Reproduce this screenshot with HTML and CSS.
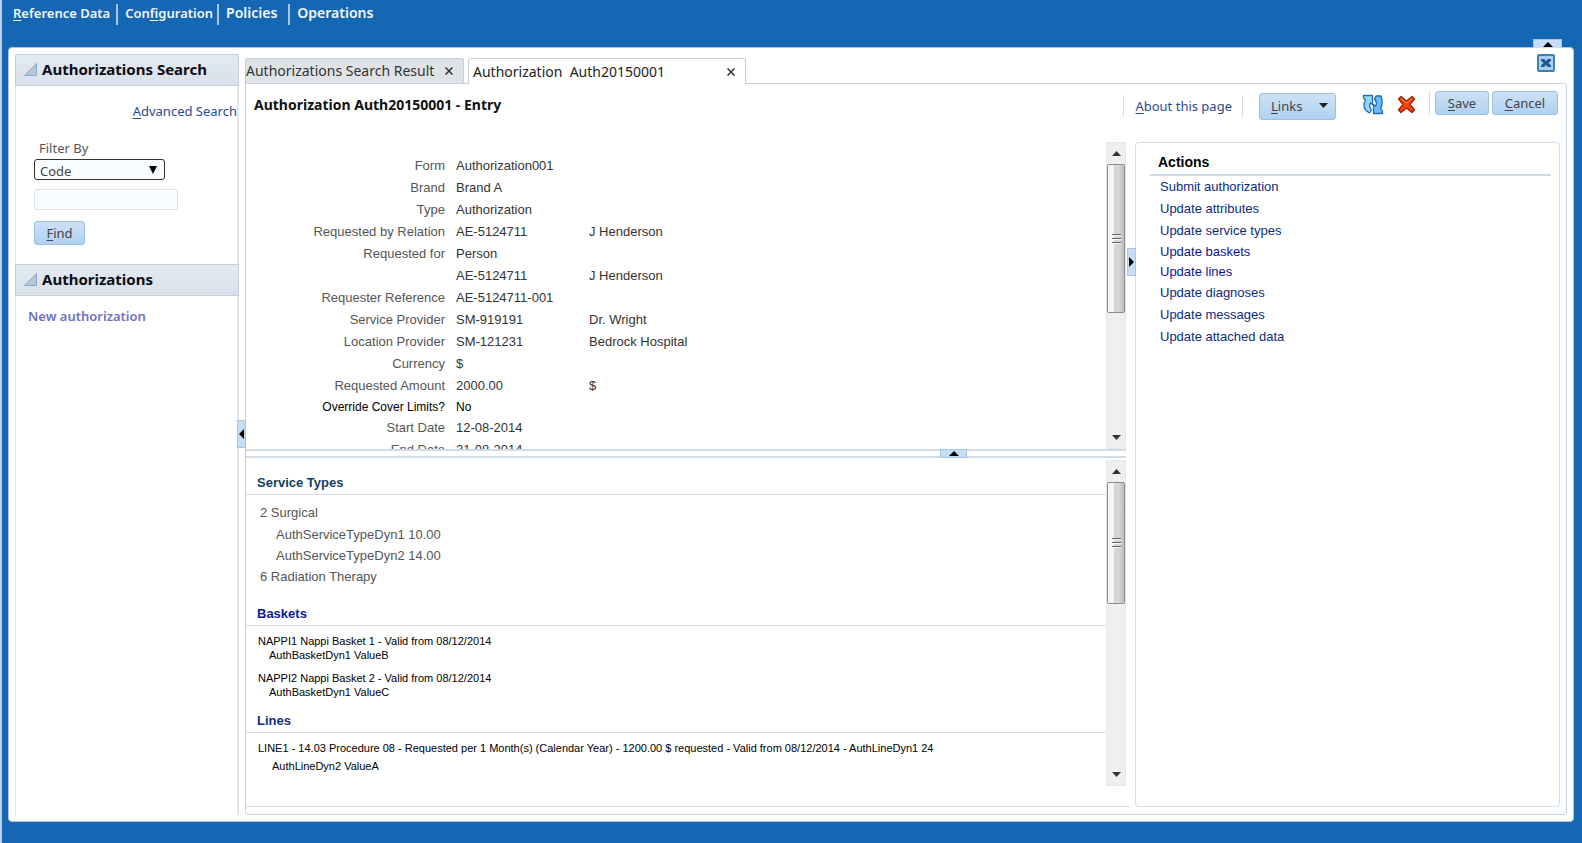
FILE: index.html
```html
<!DOCTYPE html>
<html lang="en">
<head>
<meta charset="utf-8">
<title>Authorization Auth20150001</title>
<link rel="stylesheet" href="styles.css">
</head>
<body>
<nav class="menu">
  <a href="#"><u>R</u>eference Data</a>
  <a class="snug" href="#">Con<u>f</u>iguration</a>
  <a class="large" href="#">Policies</a>
  <a class="large" href="#">Operations</a>
</nav>
<div class="shell">
  <button class="grip grip-top" aria-label="Collapse header"><svg width="10" height="5" viewBox="0 0 10 5"><path d="M0 5 5 0l5 5z"/></svg></button>
  <aside class="sidebar">
    <h2 class="side-head"><svg width="13" height="13" viewBox="0 0 13 13"><path d="M12.500.5v12H.5z" fill="#b4c9d8" stroke="#86aac8"/></svg>Authorizations Search</h2>
    <form class="search">
      <a class="advanced" href="#"><u>A</u>dvanced Search</a>
      <label for="filter">Filter By</label>
      <div class="select-wrap">
        <select id="filter"><option>Code</option></select>
        <svg width="8" height="8" viewBox="0 0 8 8"><path d="M0 0h8L4 8z"/></svg>
      </div>
      <input class="query" type="text" aria-label="Filter value">
      <button class="btn find" type="button"><u>F</u>ind</button>
    </form>
    <h2 class="side-head"><svg width="13" height="13" viewBox="0 0 13 13"><path d="M12.500.5v12H.5z" fill="#b4c9d8" stroke="#86aac8"/></svg>Authorizations</h2>
    <a class="new-auth" href="#">New authorization</a>
  </aside>
  <button class="grip grip-left" aria-label="Collapse sidebar"><svg width="5" height="10" viewBox="0 0 5 10"><path d="M5 0 0 5l5 5z"/></svg></button>
  <main class="main">
    <div class="tabs">
      <div class="tab"><span>Authorizations Search Result</span><button aria-label="Close tab"><svg width="8" height="8" viewBox="0 0 8 8"><path d="M.5.5l7 7M7.500.5l-7 7" stroke="#333" stroke-width="1.500"/></svg></button></div>
      <div class="tab active"><span>Authorization&nbsp; Auth20150001</span><button aria-label="Close tab"><svg width="8" height="8" viewBox="0 0 8 8"><path d="M.5.5l7 7M7.500.5l-7 7" stroke="#333" stroke-width="1.500"/></svg></button></div>
      <button class="close-all" aria-label="Close"><svg width="12" height="10" viewBox="0 0 12 10"><path d="M1 1h3l2 2 2-2h3v1.500L8.500 5 11 7.500V9H8L6 7 4 9H1V7.500L3.500 5 1 2.500z" fill="#1d5792"/></svg></button>
    </div>
    <div class="page">
      <header class="toolbar">
        <h1>Authorization Auth20150001 - Entry</h1>
        <div class="about"><a href="#"><u>A</u>bout this page</a></div>
        <button class="btn links"><span><u>L</u>inks</span><svg width="9" height="5" viewBox="0 0 9 5"><path d="M0 0h9L4.500 5z" fill="#222"/></svg></button>
        <button class="icon refresh" aria-label="Refresh"><svg width="22" height="21" viewBox="0 0 22 21"><path d="M1.500 1.500h9v9L8.500 9C7 11 7.500 13.500 9.500 16l-2 3C2 16.500.5 11 3.500 6l-2-2z" fill="#9ad4fa" stroke="#1b6cc0" stroke-width="1.300" stroke-linejoin="round"/><path d="M20.500 19.500h-9v-9l2 1.500c1.500-2 1-4.500-1-7l1.500-3h5c1.500 4 1.500 9-.5 13l2 2z" fill="#6bbcf7" stroke="#1b6cc0" stroke-width="1.300" stroke-linejoin="round"/></svg></button>
        <button class="icon" aria-label="Delete"><svg width="19" height="19" viewBox="0 0 19 19"><path d="M4 1.500 9.500 6 15 1.500 17.500 4 13 9.500l4.500 5.500-2.500 2.500-5.500-4.500L4 17.500 1.500 15 6 9.500 1.500 4z" fill="#f4430c" stroke="#9d2408" stroke-width="1.300" stroke-linejoin="round"/><path d="M4 3.500l5.500 4.500L15 3.500" fill="none" stroke="#ff8a50"/></svg></button>
        <div class="save-group">
          <button class="btn"><u>S</u>ave</button>
          <button class="btn"><u>C</u>ancel</button>
        </div>
      </header>
      <div class="split">
        <div class="left">
          <section class="pane upper">
            <dl class="fields">
              <dt>Form</dt><dd>Authorization001</dd><dd></dd>
              <dt>Brand</dt><dd>Brand A</dd><dd></dd>
              <dt>Type</dt><dd>Authorization</dd><dd></dd>
              <dt>Requested by Relation</dt><dd>AE-5124711</dd><dd>J Henderson</dd>
              <dt>Requested for</dt><dd>Person</dd><dd></dd>
              <dt></dt><dd>AE-5124711</dd><dd>J Henderson</dd>
              <dt>Requester Reference</dt><dd>AE-5124711-001</dd><dd></dd>
              <dt>Service Provider</dt><dd>SM-919191</dd><dd>Dr. Wright</dd>
              <dt>Location Provider</dt><dd>SM-121231</dd><dd>Bedrock Hospital</dd>
              <dt>Currency</dt><dd>$</dd><dd></dd>
              <dt>Requested Amount</dt><dd>2000.00</dd><dd>$</dd>
              <dt class="strong">Override Cover Limits?</dt><dd class="strong">No</dd><dd class="strong"></dd>
              <dt>Start Date</dt><dd>12-08-2014</dd><dd></dd>
              <dt>End Date</dt><dd>31-08-2014</dd><dd></dd>
            </dl>
            <div class="bar">
              <svg width="9" height="5" viewBox="0 0 9 5"><path d="M0 5 4.500 0 9 5z"/></svg>
              <div class="thumb thumb-form"><i></i><i></i><i></i></div>
              <svg class="down" width="9" height="5" viewBox="0 0 9 5"><path d="M0 0h9L4.500 5z"/></svg>
            </div>
          </section>
          <div class="splitter"><button class="grip" aria-label="Collapse details"><svg width="10" height="5" viewBox="0 0 10 5"><path d="M0 5 5 0l5 5z"/></svg></button></div>
          <section class="pane lower">
            <div class="details">
              <h3 class="teal">Service Types</h3>
              <ul class="types">
                <li>2 Surgical<ul><li>AuthServiceTypeDyn1 10.00</li><li>AuthServiceTypeDyn2 14.00</li></ul></li>
                <li>6 Radiation Therapy</li>
              </ul>
              <h3>Baskets</h3>
              <ul class="small">
                <li>NAPPI1 Nappi Basket 1 - Valid from 08/12/2014<p>AuthBasketDyn1 ValueB</p></li>
                <li>NAPPI2 Nappi Basket 2 - Valid from 08/12/2014<p>AuthBasketDyn1 ValueC</p></li>
              </ul>
              <h3 class="navy">Lines</h3>
              <ul class="small line-list">
                <li>LINE1 - 14.03 Procedure 08 - Requested per 1 Month(s) (Calendar Year) - 1200.00 $ requested - Valid from 08/12/2014 - AuthLineDyn1 24<p>AuthLineDyn2 ValueA</p></li>
              </ul>
            </div>
            <div class="bar">
              <svg width="9" height="5" viewBox="0 0 9 5"><path d="M0 5 4.500 0 9 5z"/></svg>
              <div class="thumb thumb-details"><i></i><i></i><i></i></div>
              <svg class="down" width="9" height="5" viewBox="0 0 9 5"><path d="M0 0h9L4.500 5z"/></svg>
            </div>
          </section>
        </div>
        <section class="actions">
          <button class="grip grip-right" aria-label="Collapse actions"><svg width="5" height="10" viewBox="0 0 5 10"><path d="M0 0l5 5-5 5z"/></svg></button>
          <h2>Actions</h2>
          <ul>
            <li><a href="#">Submit authorization</a></li>
            <li><a href="#">Update attributes</a></li>
            <li><a href="#">Update service types</a></li>
            <li class="tight"><a href="#">Update baskets</a></li>
            <li class="tight"><a href="#">Update lines</a></li>
            <li><a href="#">Update diagnoses</a></li>
            <li><a href="#">Update messages</a></li>
            <li><a href="#">Update attached data</a></li>
          </ul>
        </section>
      </div>
    </div>
  </main>
</div>
</body>
</html>
```
FILE: styles.css
```css
* { box-sizing: border-box; }
body {
  margin: 0;
  height: 100vh;
  display: flex;
  flex-direction: column;
  background: #1566b3;
  border-left: 2px solid #b9cfe3;
  font: 13px/22px "Liberation Sans", Arial, sans-serif;
  color: #333;
}
h1, h2, h3, ul, dl, dd, p { margin: 0; padding: 0; }
ul { list-style: none; }
a { text-decoration: none; }
u { text-underline-offset: 2px; }
button, select, input { font: inherit; padding: 0; }
svg { display: block; }

.menu, .sidebar, .tabs, .toolbar { font-family: "Noto Sans", sans-serif; }

.menu { display: flex; padding: 4px 0 0 3px; height: 47px; }
.menu a {
  height: 21px;
  line-height: 18px;
  padding: 0 6px 0 8px;
  color: #f0f6fc;
  font-size: 13px;
  font-weight: 600;
}
.menu a + a { border-left: 2px solid #a9c8e6; }
.menu a.snug { padding: 0 4px 0 7px; }
.menu a.large { font-size: 14px; padding: 0 11px 0 7px; }

.shell {
  position: relative;
  flex: 1;
  min-height: 0;
  display: flex;
  gap: 6px;
  margin: 0 8px 21px 6px;
  padding: 6px;
  background: #fff;
  border: 1px solid #a9c6e2;
  border-radius: 4px;
}

.grip {
  display: flex;
  align-items: center;
  justify-content: center;
  background: #c6def5;
  border: 1px solid #a3c6e6;
}
.grip-top { position: absolute; right: 11px; top: -9px; width: 29px; height: 9px; border-bottom: 0; }
.grip-left { position: absolute; left: 228px; top: 372px; width: 9px; height: 28px; }
.grip-right { position: absolute; left: -9px; top: 105px; width: 9px; height: 28px; }

.sidebar {
  width: 224px;
  border: solid #e0e6ec;
  border-width: 0 2px;
  border-left-width: 1px;
}
.side-head {
  display: flex;
  align-items: center;
  gap: 5px;
  height: 32px;
  margin: 0 -2px 0 -1px;
  padding: 0 0 2px 8px;
  border: 1px solid #c2cfdc;
  background: linear-gradient(#e4eaf1, #d8e0e9);
  font-size: 15px;
  color: #0c0c14;
}
.side-head:first-child { border-radius: 3px 3px 0 0; }
.search { display: flex; flex-direction: column; align-items: flex-start; padding: 14px 0 19px 18px; }
.advanced { align-self: flex-end; line-height: 22px; color: #2b4a90; }
.search label { margin: 17px 0 0 5px; line-height: 18px; color: #555; padding-bottom: 2px; }
.select-wrap { display: grid; align-items: center; justify-items: end; }
.select-wrap > * { grid-area: 1 / 1; }
.select-wrap svg { margin-right: 8px; pointer-events: none; }
.select-wrap select {
  appearance: none;
  width: 131px;
  height: 21px;
  padding: 0 0 2px 5px;
  border: 1px solid #333;
  border-radius: 3px;
  background: #f9fdff;
  color: #444;
}
.query { width: 144px; height: 21px; margin-top: 9px; border: 1px solid #d9e2ea; border-radius: 3px; background: #f9fdff; }
.btn {
  height: 24px;
  padding-bottom: 2px;
  border: 1px solid #9cc0e0;
  border-radius: 3px;
  background: linear-gradient(#cde1f5, #afd1f1);
  color: #444;
}
.find { width: 51px; margin-top: 11px; }
.new-auth { display: block; padding: 9px 0 0 12px; color: #7070c4; font-weight: 600; }

.main { flex: 1; min-width: 0; display: flex; flex-direction: column; padding-top: 4px; }
.tabs { display: flex; height: 25px; gap: 4px; position: relative; z-index: 1; font-size: 14px; }
.tab {
  display: flex;
  align-items: center;
  justify-content: space-between;
  width: 219px;
  height: 25px;
  border: 1px solid #c2d0de;
  border-bottom: 0;
  border-radius: 3px 3px 0 0;
  background: #dfe3e8;
  color: #333;
  white-space: nowrap;
}
.tab button { border: 0; background: none; margin-right: 10px; }
.tab.active { width: 278px; height: 26px; padding-left: 4px; background: #fff; color: #222; }
.close-all {
  display: grid;
  place-items: center;
  width: 18px;
  height: 18px;
  margin: -4px 12px 0 auto;
  border: 2px solid #3f7fb8;
  border-radius: 2px;
  background: #a9cdea;
}
.page { flex: 1; min-height: 0; display: flex; flex-direction: column; border: 1px solid #c6d3e0; border-radius: 0 3px 3px 3px; }

.toolbar { display: flex; align-items: flex-start; height: 58px; padding: 7px 8px 0 8px; }
.toolbar h1 { flex: 1; font-size: 14px; line-height: 28px; color: #111; }
.about { height: 22px; margin: 4px 16px 0 0; padding: 0 10px 0 11px; border: solid #d3dee8; border-width: 0 1px; }
.about a { color: #2b4a90; line-height: 22px; }
.links { display: flex; align-items: center; justify-content: space-between; width: 77px; height: 27px; margin: 2px 26px 0 0; padding: 0 7px 2px 11px; }
.icon { border: 0; background: none; margin: 4px 13px 0 0; }
.refresh { margin-top: 3px; }
.save-group { display: flex; gap: 3px; padding-left: 5px; border-left: 1px solid #d3dee8; }
.save-group .btn { width: 54px; }
.save-group .btn + .btn { width: 66px; }

.split { flex: 1; min-height: 0; display: flex; gap: 5px; padding: 0 6px 7px 0; }
.left { flex: 1; min-width: 0; display: flex; flex-direction: column; }
.pane { min-height: 0; display: flex; }
.upper { flex: 0 1 307px; padding-right: 4px; }
.lower { flex: 1; padding: 2px 4px 20px 0; border-bottom: 1px solid #d5e0ea; }
.fields { flex: 1; overflow: hidden; display: grid; grid-template-columns: 199px 122px 1fr; grid-auto-rows: 22px; grid-template-rows: repeat(11, 22px) 20px; column-gap: 11px; align-content: start; padding-top: 13px; }
.fields dt { text-align: right; color: #555; }
.fields .strong { color: #000; font-size: 12px; line-height: 20px; }

.bar { width: 20px; display: flex; flex-direction: column; align-items: center; background: #efefef; border: 1px solid #e6e6e6; padding: 8px 0; }
.bar path { fill: #333; }
.bar .down { margin-top: auto; }
.thumb {
  width: 18px;
  margin-top: 8px;
  display: flex;
  flex-direction: column;
  align-items: center;
  justify-content: center;
  gap: 2px;
  border: 1px solid #8d8d8d;
  border-radius: 2px;
  background: linear-gradient(90deg, #f5f5f5 0 35%, #d6d6d9 36% 70%, #bcbcbe);
}
.thumb i { width: 9px; height: 2px; background: #666; border-bottom: 1px solid #f5f5f5; }
.thumb-form { height: 149px; }
.thumb-details { height: 122px; }

.splitter { height: 9px; margin-right: 4px; border: solid #d0dbe6; border-width: 2px 0; }
.splitter .grip { width: 27px; height: 9px; margin: -2px 0 0 694px; }

.details { flex: 1; min-width: 0; overflow: hidden; padding-top: 11px; }
.details h3 { height: 24px; padding-left: 11px; border-bottom: 1px solid #d2dee8; font-size: 13px; line-height: 24px; color: #0a1a96; }
.details h3.teal { color: #11405f; }
.details h3.navy { color: #14307c; }
.types { padding: 7px 0 14px 14px; color: #555; }
.types ul { padding-left: 16px; }
.types ul li:last-child { line-height: 20px; }
.small { padding: 8px 0 10px 12px; font-size: 11px; line-height: 14px; color: #000; }
.small li + li { margin-top: 9px; }
.small p { padding-left: 11px; }
.line-list p { padding: 4px 0 0 14px; }

.actions { position: relative; width: 425px; border: 1px solid #d2dee8; border-radius: 4px; padding: 7px 8px 0 14px; }
.actions h2 { height: 26px; padding-left: 8px; border-bottom: 2px solid #cfdae4; font-size: 14px; line-height: 24px; color: #000; }
.actions ul { padding: 0 0 0 10px; }
.actions li { height: 22px; }
.actions a { color: #0b2c82; }
.actions li.tight { height: 20px; line-height: 20px; }
.actions .tight a { color: #0c1496; }
```
